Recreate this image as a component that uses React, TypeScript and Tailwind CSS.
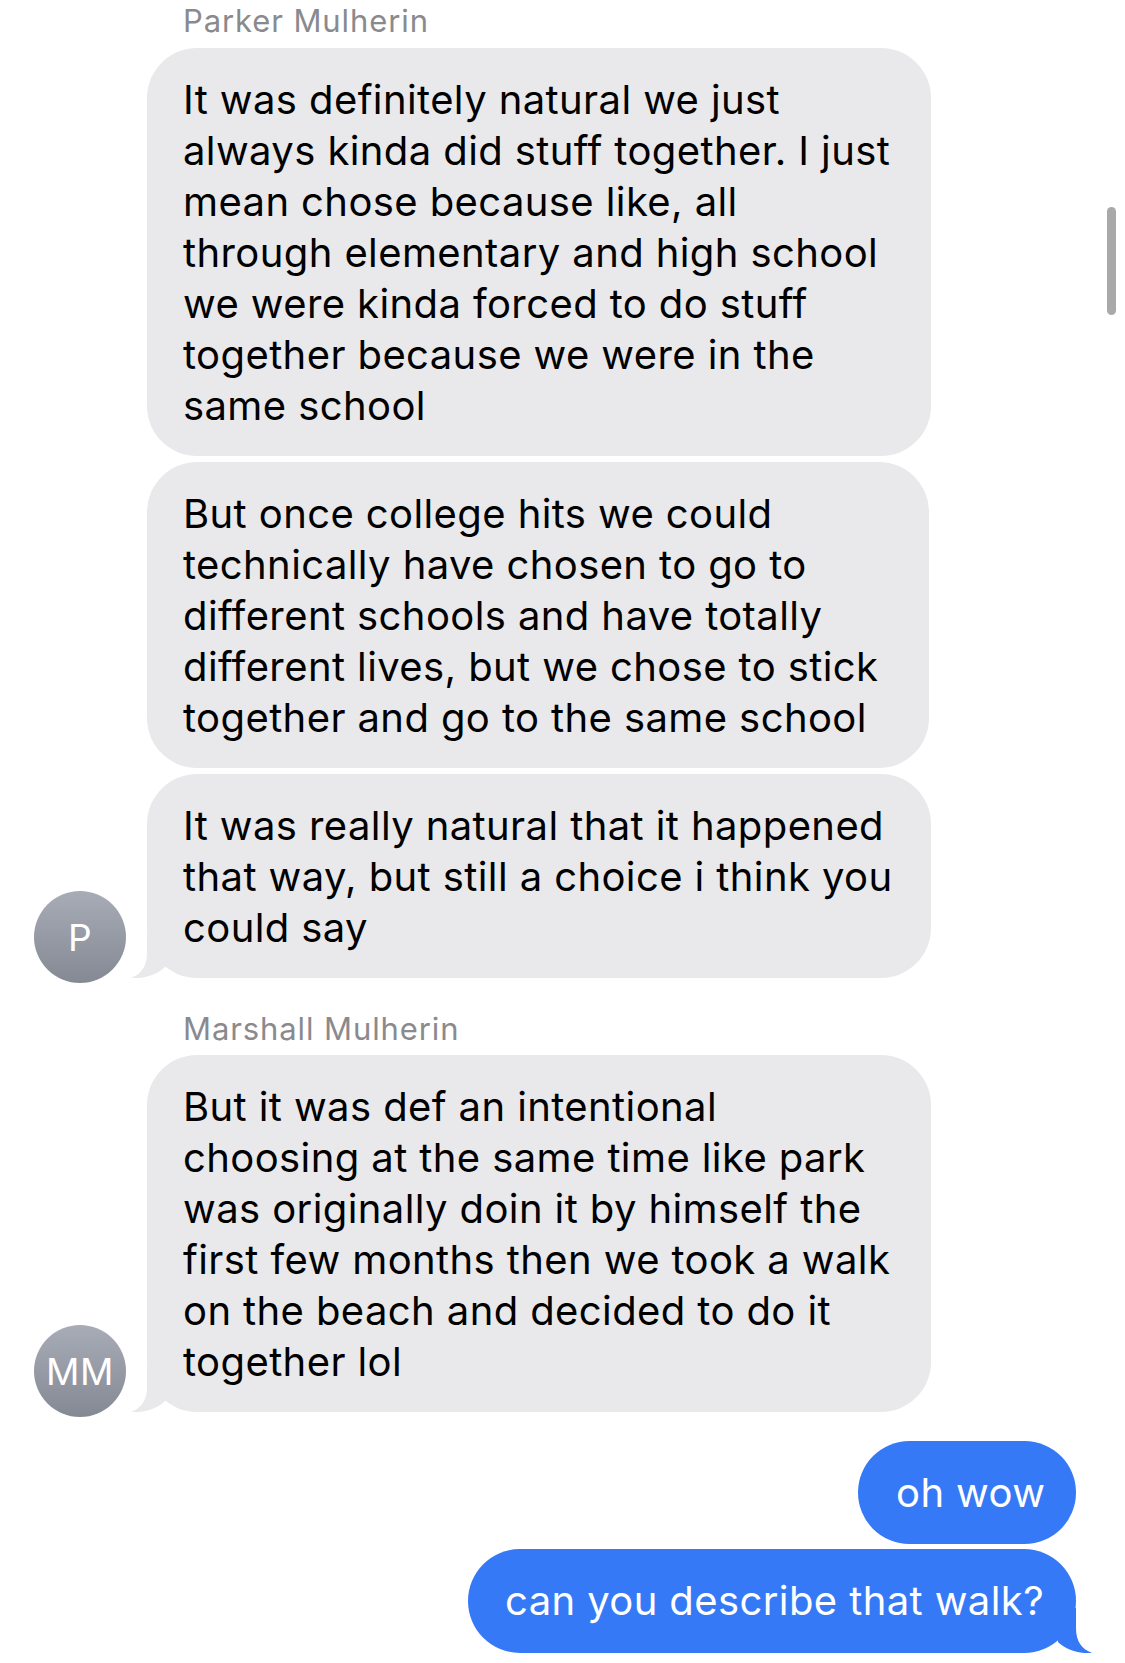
import React from "react";

const GREY = "#e9e9eb";
const BLUE = "#3579f6";

function GreyTail() {
  return (
    <svg className="absolute left-[-17px] bottom-0" width="40" height="45" viewBox="0 0 40 45">
      <path d="M17 0 L17 20 C17 34 11 41 1 45 C14 46 27 42 35 34 L35 0 Z" fill={GREY} />
    </svg>
  );
}

function BlueTail() {
  return (
    <svg className="absolute right-[-17px] bottom-0" width="40" height="45" viewBox="0 0 40 45">
      <path d="M23 0 L23 20 C23 34 29 41 39 45 C26 46 13 42 5 34 L5 0 Z" fill={BLUE} />
    </svg>
  );
}

function GreyBubble({ lines, w, tail }: { lines: string[]; w: string; tail?: boolean }) {
  return (
    <div className={`relative ${w} rounded-[50px] bg-[#e9e9eb] pl-[36px] pr-[20px] pt-[26px] pb-[25px] text-[40px] leading-[51px] tracking-[0.4px] text-black`}>
      {tail && <GreyTail />}
      {lines.map((l, i) => (
        <div key={i} className="relative whitespace-nowrap">
          {l}
        </div>
      ))}
    </div>
  );
}

function Avatar({ label }: { label: string }) {
  return (
    <div className="mb-[-5px] flex h-[92px] w-[92px] items-center justify-center rounded-full bg-gradient-to-b from-[#a8acb7] to-[#858994] text-[37px] leading-none tracking-[0.5px] text-white">
      {label}
    </div>
  );
}

export default function App() {
  return (
    <div className="relative h-[1663px] w-[1125px] overflow-hidden bg-white font-['Inter','Liberation_Sans',sans-serif]">
      <div className="flex flex-col">
        <div className="pl-[183px] pt-[3px] text-[31px] leading-[36px] tracking-[0.9px] text-[#8a8a8e]">Parker Mulherin</div>
        <div className="mt-[9px] flex items-end">
          <div className="w-[147px] shrink-0 pl-[34px]">
            <Avatar label="P" />
          </div>
          <div className="flex flex-col gap-[6px]">
            <GreyBubble
              w="w-[784px]"
              lines={[
                "It was definitely natural we just",
                "always kinda did stuff together. I just",
                "mean chose because like, all",
                "through elementary and high school",
                "we were kinda forced to do stuff",
                "together because we were in the",
                "same school",
              ]}
            />
            <GreyBubble
              w="w-[782px]"
              lines={[
                "But once college hits we could",
                "technically have chosen to go to",
                "different schools and have totally",
                "different lives, but we chose to stick",
                "together and go to the same school",
              ]}
            />
            <GreyBubble
              w="w-[784px]"
              tail
              lines={[
                "It was really natural that it happened",
                "that way, but still a choice i think you",
                "could say",
              ]}
            />
          </div>
        </div>

        <div className="mt-[33px] pl-[183px] text-[31px] leading-[36px] tracking-[0.9px] text-[#8a8a8e]">Marshall Mulherin</div>
        <div className="mt-[8px] flex items-end">
          <div className="w-[147px] shrink-0 pl-[34px]">
            <Avatar label="MM" />
          </div>
          <div className="flex flex-col">
            <GreyBubble
              w="w-[784px]"
              tail
              lines={[
                "But it was def an intentional",
                "choosing at the same time like park",
                "was originally doin it by himself the",
                "first few months then we took a walk",
                "on the beach and decided to do it",
                "together lol",
              ]}
            />
          </div>
        </div>

        <div className="mt-[29px] flex flex-col items-end gap-[5px] pr-[49px]">
          <div className="w-[218px] rounded-[52px] bg-[#3579f6] pl-[38px] pt-[26px] pb-[26px] text-[40px] leading-[51px] tracking-[0.4px] text-white whitespace-nowrap">
            oh wow
          </div>
          <div className="relative w-[608px] rounded-[52px] bg-[#3579f6] pl-[37px] pt-[26px] pb-[27px] text-[40px] leading-[51px] tracking-[0.4px] text-white whitespace-nowrap">
            <BlueTail />
            <span className="relative">can you describe that walk?</span>
          </div>
        </div>
      </div>

      <div className="absolute left-[1107px] top-[207px] h-[108px] w-[9px] rounded-full bg-[#a9a9a9]" />
    </div>
  );
}
